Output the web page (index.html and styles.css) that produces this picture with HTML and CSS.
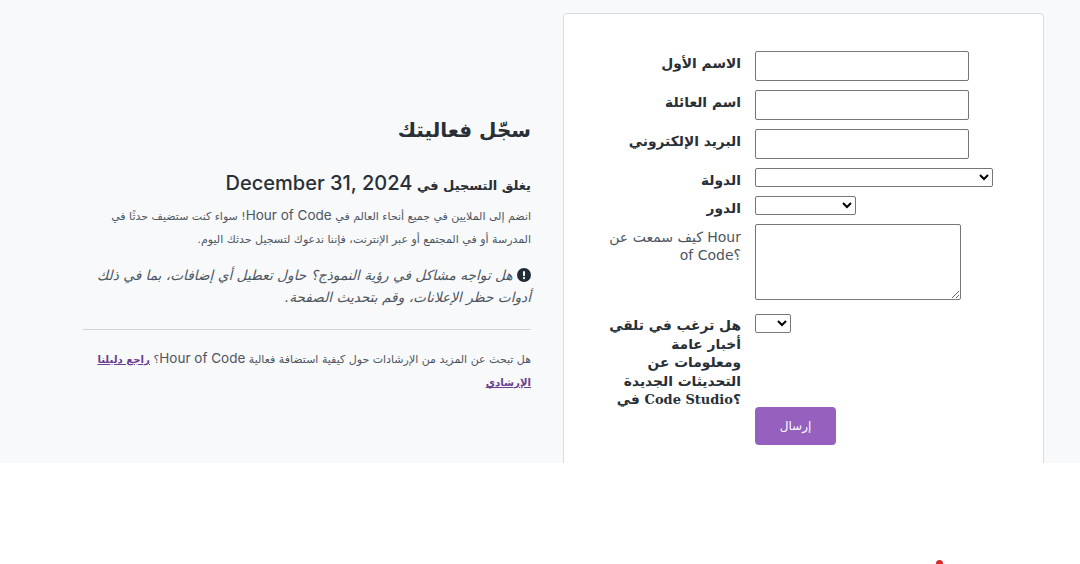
FILE: index.html
```html
<!DOCTYPE html>
<html lang="ar" dir="rtl">
<head>
<meta charset="utf-8">
<title>سجّل فعاليتك</title>
<link rel="stylesheet" href="styles.css">
</head>
<body>
<section class="band">
  <div class="card">
    <form class="form">
      <div class="row"><label class="label">الاسم الأول</label><input class="field" type="text"></div>
      <div class="row"><label class="label">اسم العائلة</label><input class="field" type="text"></div>
      <div class="row"><label class="label">البريد الإلكتروني</label><input class="field" type="text"></div>
      <div class="row"><label class="label label-tight">الدولة</label><select class="pick pick-country"><option></option></select></div>
      <div class="row"><label class="label label-tight">الدور</label><select class="pick pick-role"><option></option></select></div>
      <div class="row row-area"><label class="label label-plain">كيف سمعت عن Hour of Code؟</label><textarea class="area"></textarea></div>
      <div class="row row-news"><label class="label label-news">هل ترغب في تلقي<br>أخبار عامة<br>ومعلومات عن<br>التحديثات الجديدة<br>في <span class="studio">Code Studio</span>؟</label><select class="pick pick-news"><option></option></select></div>
      <div class="row row-submit"><span class="label label-space"></span><button class="submit" type="button">إرسال</button></div>
    </form>
  </div>
  <div class="intro">
    <h1 class="title">سجّل فعاليتك</h1>
    <h2 class="deadline">يغلق التسجيل في <span class="date">December 31, 2024</span></h2>
    <p class="copy">انضم إلى الملايين في جميع أنحاء العالم في <span class="latin">Hour of Code</span>! سواء كنت ستضيف حدثًا في المدرسة أو في المجتمع أو عبر الإنترنت، فإننا ندعوك لتسجيل حدثك اليوم.</p>
    <p class="notice"><svg class="notice-icon" viewBox="0 0 14 14" aria-hidden="true"><circle cx="7" cy="7" r="7" fill="#212b36"/><rect x="6" y="3" width="2" height="5.2" rx="1" fill="#f8f9fa"/><circle cx="7" cy="10.2" r="1.1" fill="#f8f9fa"/></svg> هل تواجه مشاكل في رؤية النموذج؟ حاول تعطيل أي إضافات، بما في ذلك أدوات حظر الإعلانات، وقم بتحديث الصفحة.</p>
    <hr class="rule">
    <p class="copy">هل تبحث عن المزيد من الإرشادات حول كيفية استضافة فعالية <span class="latin">Hour of Code</span>؟ <a class="link" href="#">راجع دليلنا الإرشادي</a></p>
  </div>
</section>
<div class="below"><span class="dot"></span></div>
</body>
</html>
```

FILE: styles.css
```css
* { box-sizing: border-box; }
html, body { margin: 0; height: 564px; overflow: hidden; background: #fff; }
body { font-family: "DejaVu Sans", "Noto Sans", sans-serif; color: #292f36; }

.band {
  display: flex;
  align-items: flex-start;
  gap: 32px;
  height: 463px;
  padding: 13px 36px 0 0;
  background: #f8f9fa;
  overflow: hidden;
}

.card {
  flex: none;
  width: 481px;
  height: 480px;
  padding: 37px 0 0;
  background: #fff;
  border: 1px solid #dadce0;
  border-radius: 4px;
}
.form { display: flex; flex-direction: column; }
.row { display: flex; direction: ltr; gap: 14px; align-items: flex-start; padding-left: 41px; }
.label {
  flex: none;
  width: 136px;
  font-size: 13.8px;
  font-weight: 700;
  line-height: 24px;
  text-align: right;
  color: #292f36;
}
.field { width: 214px; height: 30px; margin: 0 0 9px; border: 1px solid #767676; border-radius: 2px; background: #fff; }
.pick { height: 19px; margin: 0 0 9px; border: 1px solid #767676; border-radius: 2px; background: #fff; font-size: 13px; }
.pick-country { width: 238px; }
.pick-role { width: 101px; }
.pick-news { width: 36px; margin: 0; }
.area { display: block; width: 206px; height: 76px; margin: 0; border: 1px solid #767676; border-radius: 2px; background: #fff; }
.row-area { margin-bottom: 14px; }
.label-tight { height: 19px; }
.label-plain { padding-top: 4px; font-size: 14px; font-weight: 400; line-height: 18px; color: #4d5560; }
.label-news { width: 150px; margin-left: -14px; line-height: 18.5px; padding-top: 2px; }
.studio { font: 700 13px/18.5px "DejaVu Serif", serif; }
.row-news { height: 93px; }
.label-space { height: 1px; }
.submit {
  width: 81px;
  height: 38px;
  border: 0;
  border-radius: 4px;
  background: #9660bf;
  color: #fff;
  font: 400 12px "DejaVu Sans", sans-serif;
}

.intro { flex: none; width: 448px; padding-top: 98px; }
.title { margin: 0 0 20px; font: 700 20px/38px "DejaVu Sans", sans-serif; color: #292f36; }
.deadline { margin: 0 0 4px; font: 700 13px/28px "DejaVu Sans", sans-serif; color: #292f36; }
.date { font: 500 20px/28px "Inter", "DejaVu Sans", sans-serif; }
.copy { margin: 0; font-size: 11px; line-height: 23px; color: #4d5560; }
.latin { font: 400 13.5px/23px "Inter", "DejaVu Sans", sans-serif; }
.notice { margin: 13px 0 0; font-size: 13.7px; font-style: italic; line-height: 22px; color: #4d5560; }
.notice-icon { display: inline-block; width: 14px; height: 14px; vertical-align: -2px; }
.rule { margin: 21px 0 17px; border: 0; border-top: 1px solid #d4d5d7; }
.link { color: #6c3f8f; font-weight: 700; font-size: 10.2px; text-decoration: underline; }

.below { position: relative; height: 101px; }
.dot { position: absolute; left: 936px; top: 97px; width: 7px; height: 7px; border-radius: 50%; background: #d62b2b; }
```
